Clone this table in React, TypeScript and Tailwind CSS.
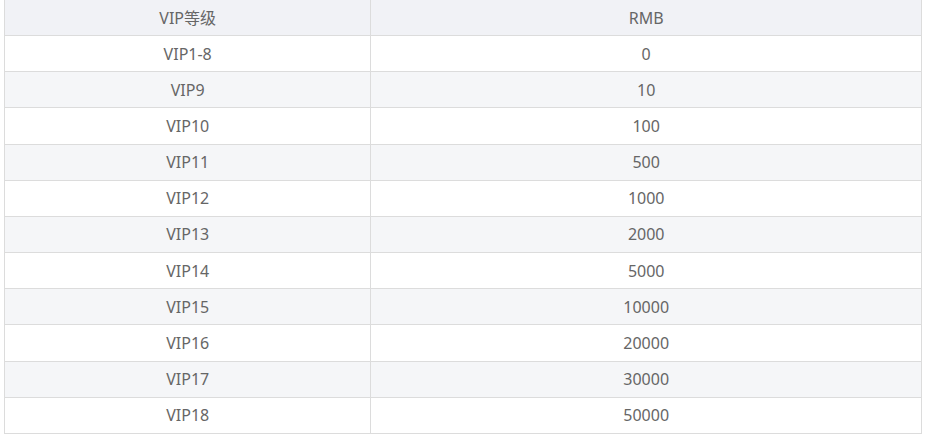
const rows = [
  ['VIP1-8', '0'],
  ['VIP9', '10'],
  ['VIP10', '100'],
  ['VIP11', '500'],
  ['VIP12', '1000'],
  ['VIP13', '2000'],
  ['VIP14', '5000'],
  ['VIP15', '10000'],
  ['VIP16', '20000'],
  ['VIP17', '30000'],
  ['VIP18', '50000'],
]

export default function App() {
  return (
    <div
      className="w-[936px] h-[438px] bg-white overflow-hidden"
      style={{ fontFamily: '"Noto Sans", "Noto Sans CJK SC", sans-serif' }}
    >
      <div className="ml-[4px] w-[918px] border-x border-[#dcdcdc] text-[16px] leading-none text-[#666]">
        {/* Header */}
        <div className="flex h-[36px] bg-[#f1f2f6] border-b border-[#dcdcdc]">
          <div className="w-[40%] flex items-center justify-center border-r border-[#dcdcdc]">VIP等级</div>
          <div className="flex-1 flex items-center justify-center">RMB</div>
        </div>
        {rows.map(([level, rmb], i) => (
          <div
            key={level}
            className={`flex h-[36.18px] border-b border-[#dcdcdc] ${i % 2 === 1 ? 'bg-[#f5f6f8]' : 'bg-white'}`}
          >
            <div className="w-[40%] flex items-center justify-center border-r border-[#dcdcdc]">{level}</div>
            <div className="flex-1 flex items-center justify-center">{rmb}</div>
          </div>
        ))}
      </div>
    </div>
  )
}
